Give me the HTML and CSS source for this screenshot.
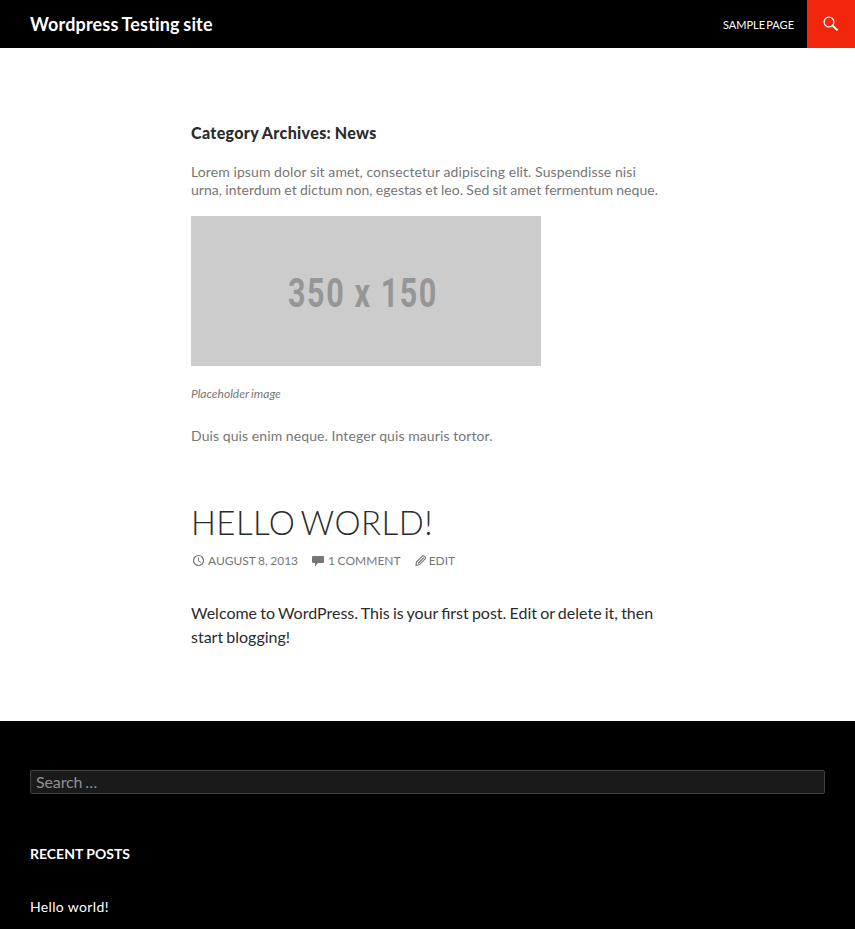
FILE: index.html
```html
<!DOCTYPE html>
<html lang="en">
<head>
<meta charset="utf-8">
<title>News | Wordpress Testing site</title>
<link rel="stylesheet" href="styles.css">
</head>
<body>
<header class="site-header">
  <h1 class="site-title">Wordpress Testing site</h1>
  <nav class="nav"><a class="nav-link">Sample Page</a></nav>
  <button class="search-toggle" aria-label="Search">
    <svg width="16" height="16" viewBox="0 0 16 16" fill="none" stroke="#fff"><circle cx="6" cy="6" r="4.9" stroke-width="1.3"/><path d="M9.6 9.6L14.6 14.4" stroke-width="2"/></svg>
  </button>
</header>
<main class="content">
  <header class="archive-header">
    <h1 class="archive-title">Category Archives: News</h1>
    <div class="description">
      <p><span class="loose">Lorem ipsum dolor sit amet, consectetur adipiscing elit. Suspendisse nisi</span><br><span class="tight">urna, interdum et dictum non, egestas et leo. Sed sit amet fermentum neque.</span></p>
      <figure class="figure">
        <div class="placeholder"><span class="placeholder-text">350 x 150</span></div>
        <figcaption class="caption">Placeholder image</figcaption>
      </figure>
      <p class="loose">Duis quis enim neque. Integer quis mauris tortor.</p>
    </div>
  </header>
  <article class="post">
    <h1 class="entry-title">Hello world!</h1>
    <div class="meta">
      <span class="meta-item date"><svg class="icon" width="16" height="16" viewBox="0 0 16 16" fill="none" stroke="#767676"><circle cx="7.5" cy="7.5" r="5" stroke-width="1.2"/><path d="M7.5 4.5V8L10 9.5"/></svg>August 8, 2013</span>
      <span class="meta-item comments"><svg class="icon" width="16" height="16" viewBox="0 0 16 16" fill="#767676"><path d="M2 3H12Q13 3 13 4V9Q13 10 12 10H7L4 13.5V10H2Q1 10 1 9V4Q1 3 2 3Z"/></svg>1 Comment</span>
      <span class="meta-item edit"><svg class="icon" width="14" height="16" viewBox="0 0 14 16" fill="none" stroke="#767676" stroke-width="1.1"><path d="M2 12.5L2.4 9L8.6 2.8Q9.2 2.2 9.8 2.8L11.4 4.4Q12 5 11.4 5.6L5.2 11.8ZM4 10.5L9.8 4.6"/></svg>Edit</span>
    </div>
    <p class="entry-content">Welcome to WordPress. This is your first post. Edit or delete it, then<br>start blogging!</p>
  </article>
</main>
<footer class="footer">
  <input class="search-field" type="search" placeholder="Search …">
  <h2 class="widget-title">Recent Posts</h2>
  <a class="recent-link">Hello world!</a>
</footer>
</body>
</html>
```
FILE: styles.css
```css
* { box-sizing: border-box; }
body { margin: 0; height: 929px; overflow: hidden; background: #fff; color: #2b2b2b; font: 400 16px/24px Lato, sans-serif; }
h1, h2, p, figure { margin: 0; }
.site-header { height: 48px; background: #000; display: flex; align-items: center; padding-left: 30px; }
.site-title { color: #fff; font-size: 18px; line-height: 48px; font-weight: 700; font-variant-ligatures: none; letter-spacing: .17px; word-spacing: -1px; }
.nav { margin-left: auto; margin-right: 13px; }
.nav-link { color: #fff; font-size: 11px; text-transform: uppercase; word-spacing: -1.5px; }
.search-toggle { width: 48px; height: 48px; border: 0; padding: 0; background: #f2260d; display: flex; align-items: center; justify-content: center; }
.content { width: 474px; height: 673px; margin-left: 191px; padding-top: 75px; }
.archive-title { font-size: 16px; line-height: 20px; font-weight: 900; letter-spacing: .35px; word-spacing: -.5px; }
.description { padding-top: 20px; color: #767676; font-size: 14px; line-height: 18px; }
.loose { letter-spacing: .1px; word-spacing: -.1px; }
.tight { letter-spacing: .05px; word-spacing: -.45px; }
.figure { margin-top: 17px; margin-bottom: 24px; }
.placeholder { width: 350px; height: 150px; padding: 5px 6px 0 0; background: #ccc; display: flex; align-items: center; justify-content: center; }
.placeholder-text { color: #969696; font: 700 40px/48px Roboto, sans-serif; letter-spacing: 2px; transform: scaleX(.765); }
.caption { font-size: 12px; font-style: italic; line-height: 18px; margin-top: 19px; word-spacing: -.6px; }
.post { padding-top: 59px; }
.entry-title { font-size: 33px; font-weight: 300; line-height: 36px; text-transform: uppercase; letter-spacing: .45px; word-spacing: -3.5px; }
.meta { display: flex; height: 20px; margin-top: 11px; align-items: center; color: #767676; font-size: 12px; line-height: 20px; text-transform: uppercase; word-spacing: -.6px; }
.meta-item { display: flex; align-items: center; }
.icon { margin-right: 1px; }
.comments { margin-left: 13px; letter-spacing: .03px; }
.edit { margin-left: 13px; }
.entry-content { margin-top: 30px; word-spacing: -.93px; }
.footer { height: 208px; background: #000; padding: 49px 30px 0; color: #fff; }
.search-field { display: block; width: 100%; height: 24px; border: 1px solid #414141; border-radius: 2px; background: #1a1a1a; color: #fff; padding: 0 5px 2px; font: 16px Lato, sans-serif; word-spacing: -1.2px; letter-spacing: -.12px; }
.search-field::placeholder { color: #919191; }
.widget-title { margin-top: 51px; font-size: 14px; line-height: 18px; font-weight: 700; text-transform: uppercase; }
.recent-link { display: block; margin-top: 35px; font-size: 14px; line-height: 18px; letter-spacing: .35px; }
```
